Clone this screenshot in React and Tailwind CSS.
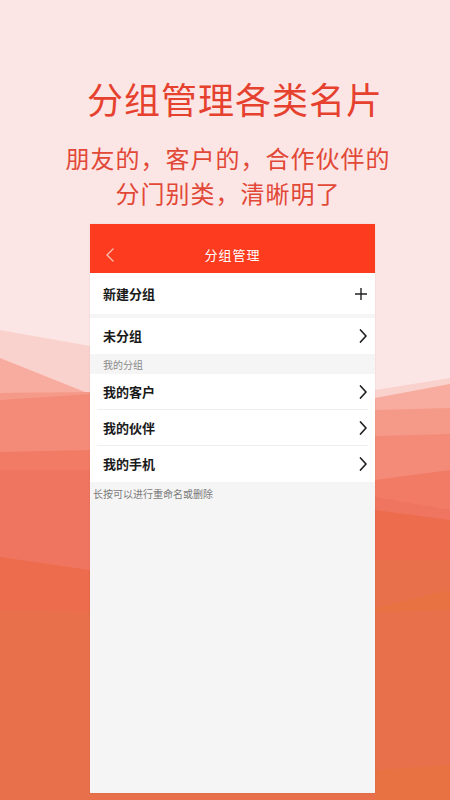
import React from "react";

const cjk = { fontFamily: '"Noto Sans CJK SC", "Noto Sans", sans-serif' };

function Chevron() {
  return (
    <svg width="10" height="16" viewBox="0 0 10 16" fill="none">
      <path d="M2.5 2 L8 8 L2.5 14" stroke="#222" strokeWidth="1.7" strokeLinecap="round" strokeLinejoin="round" />
    </svg>
  );
}

function Plus() {
  return (
    <svg width="14" height="14" viewBox="0 0 14 14" fill="none">
      <path d="M7 1 V13 M1 7 H13" stroke="#222" strokeWidth="1.4" />
    </svg>
  );
}

function Background() {
  return (
    <svg className="absolute inset-0" width="450" height="800" viewBox="0 0 450 800" preserveAspectRatio="none">
      <rect width="450" height="800" fill="#fce6e5" />
      <polygon points="0,330 90,346 375,390 450,378 450,800 0,800" fill="#fad2cd" />
      <polygon points="0,358 90,394 375,398 450,384 450,800 0,800" fill="#f8ab9f" />
      <polygon points="0,393 90,392 375,410 450,408 450,800 0,800" fill="#f59a89" />
      <polygon points="0,400 90,394 375,436 450,434 450,800 0,800" fill="#f48b78" />
      <polygon points="0,452 90,450 375,480 450,470 450,800 0,800" fill="#f27b65" />
      <polygon points="0,470 90,470 375,497 450,510 450,800 0,800" fill="#f07560" />
      <polygon points="0,557 90,570 375,510 450,520 450,800 0,800" fill="#ec6c4d" />
      <polygon points="0,610 90,612 375,560 450,560 450,800 0,800" fill="#e8704a" />
      <polygon points="375,608 450,590 450,610 375,612" fill="#e9733f" opacity="0.7" />
      <polygon points="375,770 450,765 450,800 375,800" fill="#e7733a" opacity="0.5" />
    </svg>
  );
}

function Row({ label, icon, divider }) {
  return (
    <div className="bg-white px-[7px]">
      <div className={`flex h-[36px] items-center justify-between pl-[6px] ${divider ? "border-b border-[#eeeeee]" : ""}`}>
        <span className="text-[13px] font-bold text-[#1a1a1a]" style={cjk}>{label}</span>
        <span className="flex items-center">{icon}</span>
      </div>
    </div>
  );
}

export default function App() {
  return (
    <div className="relative h-[800px] w-[450px] overflow-hidden bg-[#fce6e5]" style={cjk}>
      <Background />
      <div className="relative flex flex-col items-center pt-[76px]">
        <h1 className="ml-[20px] text-[36px] leading-[44px] tracking-[1px] text-[#e6412f]" style={cjk}>分组管理各类名片</h1>
        <p className="ml-[6px] mt-[20px] text-center text-[24px] leading-[35px] tracking-[1px] text-[#e24837]" style={cjk}>
          朋友的，客户的，合作伙伴的
          <br />
          分门别类，清晰明了
        </p>
        <div className="mt-[14px] flex h-[569px] w-[285px] flex-col self-start ml-[90px] bg-[#f5f5f5] shadow-[0_0_2px_rgba(0,0,0,0.08)]">
          <div className="relative flex h-[49px] items-end justify-center bg-[#fc3b1f] pb-[8px]">
            <svg className="absolute left-[15px] bottom-[10px]" width="10" height="16" viewBox="0 0 10 16" fill="none">
              <path d="M8 2 L2 8 L8 14" stroke="#f7c2b4" strokeWidth="1.3" strokeLinecap="round" strokeLinejoin="round" />
            </svg>
            <span className="text-[13px] leading-[20px] tracking-[1px] text-white" style={cjk}>分组管理</span>
          </div>
          <div className="bg-white pl-[13px] pr-[7px]">
            <div className="flex h-[41px] items-center justify-between">
              <span className="text-[13px] font-bold text-[#1a1a1a]" style={cjk}>新建分组</span>
              <Plus />
            </div>
          </div>
          <div className="h-[4px]" />
          <Row label="未分组" icon={<Chevron />} />
          <div className="flex h-[20px] items-center px-[13px] text-[10px] text-[#8a8a8a]" style={cjk}>我的分组</div>
          <Row label="我的客户" icon={<Chevron />} divider />
          <Row label="我的伙伴" icon={<Chevron />} divider />
          <Row label="我的手机" icon={<Chevron />} />
          <div className="px-[3px] pt-[5px] text-[10px] leading-[14px] text-[#7a7a7a]" style={cjk}>长按可以进行重命名或删除</div>
        </div>
      </div>
    </div>
  );
}
